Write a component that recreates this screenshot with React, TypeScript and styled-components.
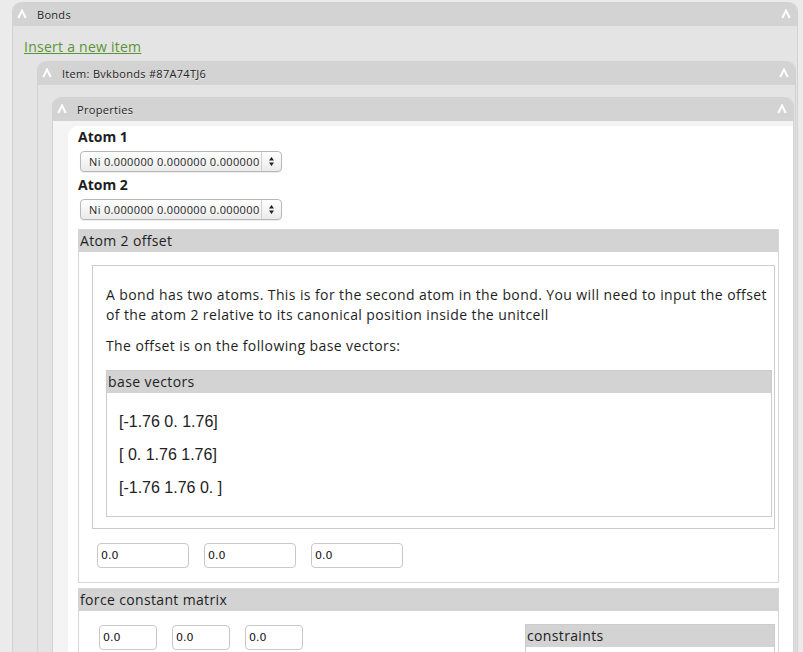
import React from "react";
import styled, { createGlobalStyle } from "styled-components";

const GlobalStyle = createGlobalStyle`
  html {
    overflow: hidden;
  }
  body {
    margin: 0;
    background: #ebebeb;
    font-family: "Open Sans", "DejaVu Sans", sans-serif;
    color: #1e1e1e;
  }
`;

const Chevron: React.FC = () => (
  <svg width="10" height="10" viewBox="0 0 10 10">
    <polyline
      points="1.3,9 5,1.5 8.7,9"
      fill="none"
      stroke="#fff"
      strokeWidth="2"
      strokeLinejoin="miter"
    />
  </svg>
);

const Panel = styled.div<{ $ml: number; $mt: number; $mr: number }>`
  margin: ${(p) => p.$mt}px ${(p) => p.$mr}px 0 ${(p) => p.$ml}px;
  border-radius: 9px 9px 0 0;
  border-left: 1px solid #d2d2d2;
  border-right: 1px solid #d2d2d2;
`;

const PanelHeader = styled.div`
  height: 24px;
  display: flex;
  align-items: center;
  padding: 0 6px 0 4px;
  background: #d3d3d3;
  border-radius: 9px 9px 0 0;
  font-size: 11px;
  letter-spacing: 0.3px;
  color: #222;
  text-shadow: 0 1px 0 rgba(255, 255, 255, 0.5);
  svg {
    flex: none;
  }
  span {
    flex: 1;
    margin-left: 10px;
  }
`;

const PanelBody = styled.div<{ $bg: string; $pad: string }>`
  background: ${(p) => p.$bg};
  padding: ${(p) => p.$pad};
`;

const InsertLink = styled.a`
  display: block;
  font-size: 14px;
  line-height: 18px;
  letter-spacing: 0.25px;
  color: #5b9437;
  text-decoration: underline;
  margin-bottom: 5px;
  cursor: pointer;
`;

const Sheet = styled.div`
  background: #fff;
  border-radius: 10px 0 0 0;
  padding: 2px 14px 40px 10px;
  min-height: 600px;
`;

const FieldLabel = styled.div`
  font-size: 14px;
  font-weight: bold;
  line-height: 18px;
  margin-bottom: 5px;
`;

const Field = styled.div`
  margin-bottom: 4px;
`;

const SelectBox = styled.div`
  display: flex;
  width: 200px;
  height: 19px;
  margin-left: 2px;
  border: 1px solid #b8b8b8;
  border-radius: 4px;
  background: linear-gradient(#ffffff, #ebebeb);
  box-shadow: 0 1px 1px rgba(0, 0, 0, 0.08);
  font-size: 11px;
  letter-spacing: 0.35px;
  line-height: 19px;
`;

const SelectText = styled.div`
  flex: 1;
  overflow: hidden;
  white-space: nowrap;
  padding-left: 8px;
`;

const SelectArrows = styled.div`
  width: 19px;
  border-left: 1px solid #d0d0d0;
  display: flex;
  align-items: center;
  justify-content: center;
`;

const Section = styled.div<{ $mt: number }>`
  border: 1px solid #d6d6d6;
  margin-top: ${(p) => p.$mt}px;
`;

const SectionHeader = styled.div`
  height: 22px;
  line-height: 22px;
  background: #d3d3d3;
  font-size: 14px;
  letter-spacing: 0.35px;
  padding-left: 1px;
`;

const SectionBody = styled.div`
  padding: 13px 3px 14px 13px;
`;

const InfoBox = styled.div`
  border: 1px solid #cccccc;
  padding: 19px 2px 11px 13px;
  font-size: 14px;
  line-height: 20px;
  letter-spacing: 0.4px;
  p {
    margin: 0 0 11px;
  }
`;

const VectorBox = styled.div`
  border: 1px solid #cccccc;
  margin-top: 14px;
`;

const VectorHeader = styled.div`
  height: 22px;
  line-height: 22px;
  background: #d3d3d3;
  padding-left: 1px;
  font-size: 14px;
`;

const VectorList = styled.div`
  padding: 19px 0 18px 12px;
  font-family: "Liberation Sans", Arial, sans-serif;
  font-size: 16px;
  line-height: 20px;
  letter-spacing: 0;
  color: #222;
  div + div {
    margin-top: 13px;
  }
`;

const InputRow = styled.div<{ $pl: number; $mt: number }>`
  display: flex;
  gap: 15px;
  padding-left: ${(p) => p.$pl}px;
  margin-top: ${(p) => p.$mt}px;
`;

const NumInput = styled.input<{ $w: number }>`
  box-sizing: border-box;
  width: ${(p) => p.$w}px;
  height: 25px;
  border: 1px solid #c8c8c8;
  border-radius: 4px;
  padding: 0 3px;
  font-family: "DejaVu Sans", sans-serif;
  font-size: 11px;
  color: #111;
  background: #fff;
  outline: none;
`;

const ForceBody = styled.div`
  display: flex;
  justify-content: space-between;
  align-items: flex-start;
  min-height: 120px;
`;

const ForceInputs = styled.div`
  padding: 14px 0 0 20px;
`;

const ConstraintBox = styled.div`
  width: 248px;
  margin: 13px 3px 0 0;
  border: 1px solid #cccccc;
  min-height: 80px;
`;

const base = ["[-1.76 0. 1.76]", "[ 0. 1.76 1.76]", "[-1.76 1.76 0. ]"];

const AtomSelect: React.FC<{ label: string }> = ({ label }) => (
  <Field>
    <FieldLabel>{label}</FieldLabel>
    <SelectBox>
      <SelectText>Ni 0.000000 0.000000 0.000000</SelectText>
      <SelectArrows>
        <svg width="5" height="9" viewBox="0 0 5 9">
          <path d="M2.5 0 L5 3.5 L0 3.5 Z M2.5 9 L5 5.5 L0 5.5 Z" fill="#222" />
        </svg>
      </SelectArrows>
    </SelectBox>
  </Field>
);

export default function App() {
  return (
    <>
      <GlobalStyle />
      <Panel $ml={12} $mt={2} $mr={5}>
        <PanelHeader>
          <Chevron />
          <span>Bonds</span>
          <Chevron />
        </PanelHeader>
        <PanelBody $bg="#e4e4e4" $pad="12px 1px 0 11px">
          <InsertLink>Insert a new item</InsertLink>
          <Panel $ml={13} $mt={0} $mr={0}>
            <PanelHeader>
              <Chevron />
              <span>Item: Bvkbonds #87A74TJ6</span>
              <Chevron />
            </PanelHeader>
            <PanelBody $bg="#e4e4e4" $pad="12px 1px 0 14px">
              <Panel $ml={0} $mt={0} $mr={0}>
                <PanelHeader>
                  <Chevron />
                  <span>Properties</span>
                  <Chevron />
                </PanelHeader>
                <PanelBody $bg="#f4f4f4" $pad="5px 0 0 15px">
                  <Sheet>
                    <AtomSelect label="Atom 1" />
                    <AtomSelect label="Atom 2" />
                    <Section $mt={9}>
                      <SectionHeader>Atom 2 offset</SectionHeader>
                      <SectionBody>
                        <InfoBox>
                          <p>
                            A bond has two atoms. This is for the second atom in the bond. You will need to input the offset of the atom 2 relative to its canonical position inside the unitcell
                          </p>
                          <p>The offset is on the following base vectors:</p>
                          <VectorBox>
                            <VectorHeader>base vectors</VectorHeader>
                            <VectorList>
                              {base.map((v) => (
                                <div key={v}>{v}</div>
                              ))}
                            </VectorList>
                          </VectorBox>
                        </InfoBox>
                        <InputRow $pl={5} $mt={14}>
                          <NumInput $w={92} defaultValue="0.0" />
                          <NumInput $w={92} defaultValue="0.0" />
                          <NumInput $w={92} defaultValue="0.0" />
                        </InputRow>
                      </SectionBody>
                    </Section>
                    <Section $mt={5}>
                      <SectionHeader>force constant matrix</SectionHeader>
                      <ForceBody>
                        <ForceInputs>
                          <InputRow $pl={0} $mt={0}>
                            <NumInput $w={58} defaultValue="0.0" />
                            <NumInput $w={58} defaultValue="0.0" />
                            <NumInput $w={58} defaultValue="0.0" />
                          </InputRow>
                        </ForceInputs>
                        <ConstraintBox>
                          <SectionHeader>constraints</SectionHeader>
                        </ConstraintBox>
                      </ForceBody>
                    </Section>
                  </Sheet>
                </PanelBody>
              </Panel>
            </PanelBody>
          </Panel>
        </PanelBody>
      </Panel>
    </>
  );
}
